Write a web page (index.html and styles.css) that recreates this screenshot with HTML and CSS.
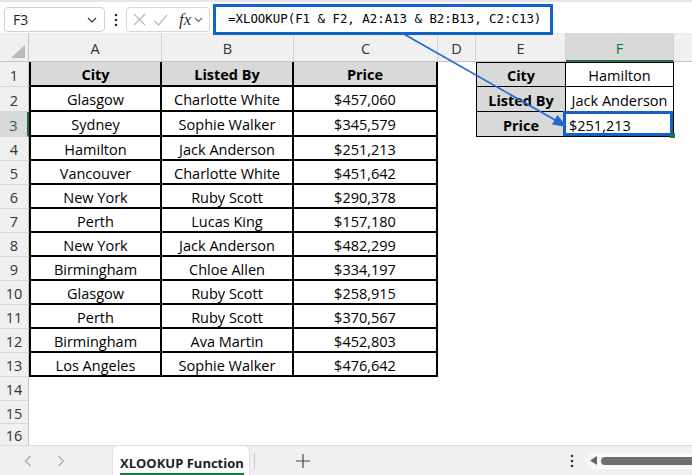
FILE: index.html
```html
<!DOCTYPE html>
<html>
<head>
	<title>XLOOKUP Function</title>
	<link rel="stylesheet" href="styles.css">
</head>
<body>
	<div class="toolbar">
		<div class="name-box">
			<span>F3</span>
			<svg class="chev" width="10" height="6" viewBox="0 0 10 6"><path d="M1 1l4 4 4-4" fill="none" stroke="#444" stroke-width="1.3"/></svg>
		</div>
		<svg class="dots" width="4" height="14" viewBox="0 0 4 14"><circle cx="2" cy="2" r="1.3"/><circle cx="2" cy="7" r="1.3"/><circle cx="2" cy="12" r="1.3"/></svg>
		<div class="fx-box">
			<svg width="13" height="13" viewBox="0 0 13 13"><path d="M1 1l11 11M12 1L1 12" stroke="#b9b9b9" stroke-width="1.2"/></svg>
			<svg width="15" height="12" viewBox="0 0 15 12"><path d="M1 6.5l4.5 4.5L14 1" fill="none" stroke="#b9b9b9" stroke-width="1.2"/></svg>
			<i class="fx">fx</i>
			<svg class="chev" width="9" height="6" viewBox="0 0 9 6"><path d="M1 1l3.5 3.5L8 1" fill="none" stroke="#666" stroke-width="1.1"/></svg>
		</div>
		<div class="formula">=XLOOKUP(F1 &amp; F2, A2:A13 &amp; B2:B13, C2:C13)</div>
	</div>

	<div class="sheet" id="sheet"></div>

	<div class="tabs">
		<div class="tab-nav">
			<svg width="8" height="12" viewBox="0 0 8 12"><path d="M6.5 1L1.5 6l5 5" fill="none" stroke="#a8a8a8" stroke-width="1.2"/></svg>
			<svg width="8" height="12" viewBox="0 0 8 12"><path d="M1.5 1l5 5-5 5" fill="none" stroke="#a8a8a8" stroke-width="1.2"/></svg>
		</div>
		<div class="tab-active"><span>XLOOKUP Function</span></div>
		<div class="tab-sep"></div>
		<svg class="plus" width="14" height="14" viewBox="0 0 14 14"><path d="M7 0v14M0 7h14" stroke="#444" stroke-width="1.2"/></svg>
		<div class="tab-space"></div>
		<svg class="dots" width="4" height="14" viewBox="0 0 4 14"><circle cx="2" cy="2" r="1.3"/><circle cx="2" cy="7" r="1.3"/><circle cx="2" cy="12" r="1.3"/></svg>
		<div class="hscroll">
			<svg width="7" height="9" viewBox="0 0 7 9"><path d="M7 0v9L0 4.5z" fill="#666"/></svg>
			<div class="thumb"></div>
		</div>
	</div>

	<svg class="arrow" width="692" height="475" viewBox="0 0 692 475">
		<line x1="402" y1="33" x2="556" y2="120.5" stroke="#1d6bd3" stroke-width="1.6"/>
		<path d="M567 127L552 124.5 557.5 115z" fill="#1d6bd3"/>
	</svg>

<script>
	var dados = [
		["City", "Listed By", "Price"],
		["Glasgow", "Charlotte White", "$457,060"],
		["Sydney", "Sophie Walker", "$345,579"],
		["Hamilton", "Jack Anderson", "$251,213"],
		["Vancouver", "Charlotte White", "$451,642"],
		["New York", "Ruby Scott", "$290,378"],
		["Perth", "Lucas King", "$157,180"],
		["New York", "Jack Anderson", "$482,299"],
		["Birmingham", "Chloe Allen", "$334,197"],
		["Glasgow", "Ruby Scott", "$258,915"],
		["Perth", "Ruby Scott", "$370,567"],
		["Birmingham", "Ava Martin", "$452,803"],
		["Los Angeles", "Sophie Walker", "$476,642"]
	];
	var busca = [
		["City", "Hamilton"],
		["Listed By", "Jack Anderson"],
		["Price", "$251,213"]
	];
	var colunas = ["", "A", "B", "C", "D", "E", "F", ""];

	var html = "";
	// cabeçalho das colunas
	for (var c = 0; c < colunas.length; c++) {
		var cls = c == 0 ? "corner" : "col-head";
		if (colunas[c] == "F") cls += " col-active";
		if (c == colunas.length - 1) cls += " col-last";
		html += '<div class="' + cls + '">' + colunas[c] + '</div>';
	}

	// linhas
	for (var r = 1; r <= 16; r++) {
		html += '<div class="row-head' + (r == 3 ? ' row-active' : '') + '">' + r + '</div>';
		for (var c = 1; c <= 7; c++) {
			var cls = "cell";
			var txt = "";
			if (c <= 3 && r <= 13) {
				cls += " tb";
				if (c == 1) cls += " tb-first";
				if (r == 1) cls += " th";
				txt = dados[r - 1][c - 1];
			} else if ((c == 5 || c == 6) && r <= 3) {
				cls += " tl";
				if (c == 5) cls += " th tl-first";
				if (r == 1) cls += " tl-top";
				if (c == 6 && r == 3) cls += " sel";
				txt = busca[r - 1][c - 5];
			}
			html += '<div class="' + cls + '">' + txt + '</div>';
		}
	}
	document.getElementById("sheet").innerHTML = html;
</script>
</body>
</html>
```

FILE: styles.css
```css
* {
  box-sizing: border-box;
}

body {
  margin: 0;
  width: 692px;
  height: 475px;
  overflow: hidden;
  position: relative;
  display: flex;
  flex-direction: column;
  background-color: #fff;
  color: #000;
  font-family: "Open Sans", "Liberation Sans", sans-serif;
}

/* barra de fórmulas */
.toolbar {
  height: 33px;
  flex: none;
  display: flex;
  align-items: flex-start;
  border-top: 2px solid #e6e6e6;
  position: relative;
  z-index: 2;
}

.name-box {
  margin: 5px 0 0 4px;
  width: 101px;
  height: 25px;
  border: 1px solid #cfcfcf;
  border-radius: 4px;
  display: flex;
  align-items: center;
  justify-content: space-between;
  padding: 0 7px 0 8px;
  font-size: 14px;
  color: #222;
}

.dots {
  fill: #333;
  margin: 11px 0 0 9px;
}

.fx-box {
  margin: 5px 0 0 8px;
  width: 84px;
  height: 25px;
  border: 1px solid #d6d6d6;
  border-radius: 4px;
  display: flex;
  align-items: center;
  gap: 7px;
  padding-left: 6px;
}

.fx {
  font-family: "Liberation Serif", serif;
  font-size: 17px;
  color: #333;
  margin-left: 4px;
  margin-right: -4px;
}

.formula {
  margin: 2px 0 0 3px;
  width: 340px;
  height: 31px;
  border: 3px solid #1262c9;
  padding: 4px 0 0 12px;
  font-family: "DejaVu Sans Mono", "Liberation Mono", monospace;
  font-size: 12.4px;
  white-space: nowrap;
  background-color: #fff;
}

/* planilha */
.sheet {
  flex: 1;
  overflow: hidden;
  display: grid;
  grid-template-columns: 29px 133px 132px 144px 38px 90px 108px 1fr;
  grid-template-rows: 29px 25px 25px 25px repeat(10, 24px) 24px 23px 22px;
  font-size: 14.5px;
}

.corner,
.col-head,
.row-head {
  background-color: #f0f0f0;
  color: #333;
  display: flex;
  align-items: center;
  justify-content: center;
  font-size: 14.5px;
}

.corner {
  border-right: 1px solid #c4c4c4;
  border-bottom: 1px solid #c4c4c4;
  position: relative;
}

.corner::after {
  content: "";
  position: absolute;
  right: 3px;
  bottom: 3px;
  border-left: 14px solid transparent;
  border-bottom: 13px solid #b9b9b9;
}

.col-head {
  border-right: 1px solid #d2d2d2;
  border-bottom: 1px solid #c4c4c4;
  padding-top: 3px;
}

.col-last {
  border-right: none;
}

.col-active {
  background-color: #d9d9d9;
  color: #1b6e3d;
  border-bottom: 2px solid #1e7145;
}

.row-head {
  border-right: 1px solid #c4c4c4;
  border-bottom: 1px solid #d8d8d8;
  padding-top: 2px;
}

.row-active {
  background-color: #d9d9d9;
  color: #1b6e3d;
  border-right: 2px solid #1e7145;
}

.cell {
  display: flex;
  align-items: center;
  justify-content: center;
  white-space: nowrap;
  padding-top: 2px;
}

/* tabela principal, bordas grossas */
.tb {
  border-right: 2px solid #000;
  border-bottom: 2px solid #000;
}

.tb-first {
  border-left: 2px solid #000;
}

.th {
  background-color: #d9d9d9;
  font-weight: bold;
}

/* tabela de busca */
.tl {
  border-right: 1px solid #000;
  border-bottom: 1px solid #000;
}

.tl-first {
  border-left: 1px solid #000;
}

.tl-top {
  border-top: 1px solid #000;
}

.sel {
  justify-content: flex-start;
  padding-left: 3px;
  position: relative;
}

.sel::after {
  content: "";
  position: absolute;
  top: -1px;
  left: -3px;
  right: 0;
  bottom: 0;
  border: 3px solid #1262c9;
}

.sel::before {
  content: "";
  position: absolute;
  right: -2px;
  bottom: -2px;
  width: 5px;
  height: 5px;
  background-color: #1e7145;
  z-index: 1;
}

/* abas */
.tabs {
  height: 30px;
  flex: none;
  display: flex;
  align-items: center;
  background-color: #f0f0f0;
  border-top: 1px solid #dedede;
  position: relative;
}

.tab-nav {
  width: 112px;
  display: flex;
  gap: 25px;
  padding-left: 24px;
}

.tab-active {
  align-self: stretch;
  width: 138px;
  margin-top: -1px;
  background-color: #fff;
  border: 1px solid #e0e0e0;
  border-bottom: none;
  border-radius: 6px 6px 0 0;
  padding: 5px 0 0 7px;
}

.tab-active span {
  display: inline-block;
  font-size: 13px;
  font-weight: bold;
  color: #222;
  border-bottom: 2px solid #107c41;
  line-height: 18px;
  padding-bottom: 1px;
}

.tab-sep {
  width: 1px;
  height: 16px;
  background-color: #c8c8c8;
  margin-left: 4px;
}

.plus {
  margin-left: 41px;
}

.tab-space {
  flex: 1;
}

.tabs .dots {
  margin: 0;
}

.hscroll {
  margin-left: 11px;
  width: 107px;
  height: 16px;
  background-color: #f8f8f8;
  border-radius: 8px 0 0 8px;
  display: flex;
  align-items: center;
  padding-left: 5px;
  gap: 4px;
}

.thumb {
  flex: 1;
  height: 8px;
  background-color: #6e6e6e;
  border-radius: 4px 0 0 4px;
}

.arrow {
  position: absolute;
  top: 0;
  left: 0;
  pointer-events: none;
  z-index: 3;
}
```
